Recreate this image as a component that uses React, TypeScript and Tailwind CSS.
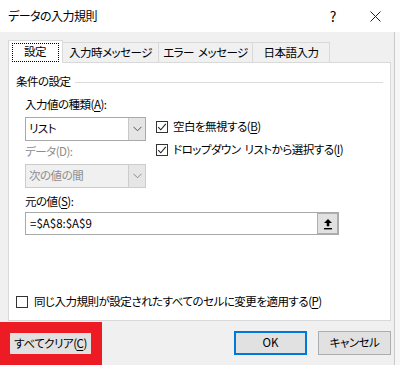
import React from 'react'

const font = "font-['Noto_Sans_CJK_JP','Noto_Sans',sans-serif] [font-feature-settings:'palt'] tracking-[-0.5px]"

function Checkbox({ checked }: { checked?: boolean }) {
  return (
    <span className="flex h-[12px] w-[12px] shrink-0 items-center justify-center border border-[#333] bg-white">
      {checked && (
        <svg width="10" height="10" viewBox="0 0 10 10">
          <path d="M1.2 5.2 L3.8 7.8 L8.8 1.8" fill="none" stroke="#222" strokeWidth="1.1" />
        </svg>
      )}
    </span>
  )
}

function Chevron({ color = '#555' }: { color?: string }) {
  return (
    <svg width="9" height="6" viewBox="0 0 9 6">
      <path d="M0.5 0.8 L4.5 4.8 L8.5 0.8" fill="none" stroke={color} strokeWidth="1" />
    </svg>
  )
}

function Select({ value, disabled }: { value: string; disabled?: boolean }) {
  return (
    <div
      className={`flex h-[24px] w-[121px] items-stretch border ${
        disabled ? 'border-[#cccccc] bg-[#f0f0f0] text-[#8d8d8d]' : 'border-[#a9a9a9] bg-white text-black'
      }`}
    >
      <span className="flex flex-1 items-center pl-[3px]">{value}</span>
      <span
        className={`flex w-[17px] items-center justify-center border-l ${
          disabled ? 'border-[#cccccc] bg-[#e6e6e6]' : 'border-[#c8c8c8] bg-[#e5e5e5]'
        }`}
      >
        <Chevron color={disabled ? '#8a8a8a' : '#555'} />
      </span>
    </div>
  )
}

function U({ children }: { children: React.ReactNode }) {
  return <span className="underline underline-offset-2">{children}</span>
}

function Gap() {
  return <span className="inline-block w-[4px]" />
}

export default function App() {
  return (
    <div className={`flex h-[365px] w-[400px] flex-col overflow-hidden bg-[#f0f0f0] text-[11.5px] text-black ${font}`}>
      {/* title bar */}
      <div className="flex h-[32px] shrink-0 items-center bg-white pl-[8px]">
        <span className="text-[12px]">データの入力規則</span>
        <span className="ml-auto mr-[34px] text-[14px] leading-none">?</span>
        <svg width="11" height="11" viewBox="0 0 11 11" className="mr-[19px]">
          <path d="M0.5 0.5 L10.5 10.5 M10.5 0.5 L0.5 10.5" stroke="#222" strokeWidth="1" />
        </svg>
      </div>

      <div className="flex flex-1">
        <div className="flex w-[394px] flex-col">
          {/* tabs + panel */}
          <div className="flex flex-col pl-[8px] pr-[3px] pt-[8px]">
            <div className="relative z-10 flex h-[23px] items-end">
              <div className="flex h-[23px] w-[55px] items-center justify-center border border-b-0 border-[#d9d9d9] bg-white pl-px pr-[2px]">
                <span className="flex h-[19px] w-[47px] items-center justify-center border border-dotted border-black">設定</span>
              </div>
              <div className="flex h-[21px] w-[96px] items-center justify-center border border-l-0 border-[#d9d9d9] bg-[#f0f0f0]">
                入力時メッセージ
              </div>
              <div className="flex h-[21px] w-[94px] items-center justify-center border border-l-0 border-[#d9d9d9] bg-[#f0f0f0]">
                エラー<Gap />メッセージ
              </div>
              <div className="flex h-[21px] w-[77px] items-center justify-center border border-l-0 border-[#d9d9d9] bg-[#f0f0f0]">
                日本語入力
              </div>
            </div>

            <div className="-mt-px flex h-[259px] flex-col border border-[#d9d9d9] bg-white px-[7px] pt-[11px]">
              <div className="flex h-[16px] items-center">
                <span>条件の設定</span>
                <span className="ml-[4px] h-px flex-1 bg-[#dcdcdc]" />
              </div>

              <div className="flex flex-col pl-[9px]">
                <div className="mt-[7px] flex h-[16px] items-center">
                  入力値の種類(<U>A</U>):
                </div>
                <div className="mt-[4px] flex">
                  <div className="flex flex-col">
                    <Select value="リスト" />
                    <div className="mt-[3px] flex h-[16px] items-center text-[#8d8d8d]">データ(D):</div>
                    <div className="mt-[4px]">
                      <Select value="次の値の間" disabled />
                    </div>
                  </div>
                  <div className="ml-[10px] flex flex-col gap-[3px]">
                    <label className="flex h-[20px] items-center gap-[5px]">
                      <Checkbox checked />
                      <span>空白を無視する(<U>B</U>)</span>
                    </label>
                    <label className="flex h-[20px] items-center gap-[5px]">
                      <Checkbox checked />
                      <span>ドロップダウン<Gap />リストから選択する(<U>I</U>)</span>
                    </label>
                  </div>
                </div>

                <div className="mt-[6px] flex h-[16px] items-center">
                  元の値(<U>S</U>):
                </div>
                <div className="mt-[2px] flex h-[23px] w-[314px] items-stretch border border-[#a9a9a9] bg-white">
                  <span className="flex flex-1 items-center pl-[4px] tracking-normal">=$A$8:$A$9</span>
                  <span className="flex w-[21px] items-center justify-center border border-[#adadad] bg-[#e1e1e1]">
                    <svg width="10" height="12" viewBox="0 0 10 12">
                      <path d="M5 1 L9 5 L6.3 5 L6.3 8.3 L3.7 8.3 L3.7 5 L1 5 Z" fill="#000" />
                      <rect x="1" y="10" width="8" height="1.4" fill="#000" />
                    </svg>
                  </span>
                </div>
              </div>

              <label className="mb-[8px] mt-auto flex h-[20px] items-center gap-[6px]">
                <Checkbox />
                <span>同じ入力規則が設定されたすべてのセルに変更を適用する(<U>P</U>)</span>
              </label>
            </div>
          </div>

          {/* footer */}
          <div className="flex flex-1">
            <div className="mt-[1px] w-[102px] bg-[#ed1c24] pl-[10px] pt-[11px]">
              <button className="flex h-[21px] w-[81px] items-center justify-center bg-[#e1e1e1]">
                すべてクリア(<U>C</U>)
              </button>
            </div>
            <div className="ml-auto mr-[3px] mt-[10px] flex gap-[11px]">
              <button className="flex h-[24px] w-[73px] items-center justify-center border-2 border-[#0078d7] bg-[#e1e1e1] tracking-normal">
                OK
              </button>
              <button className="flex h-[24px] w-[73px] items-center justify-center border border-[#adadad] bg-[#e1e1e1]">
                キャンセル
              </button>
            </div>
          </div>
        </div>
        <div className="w-px bg-[#c9c9c9]" />
        <div className="flex-1 bg-[#f6f6f6]" />
      </div>
    </div>
  )
}
